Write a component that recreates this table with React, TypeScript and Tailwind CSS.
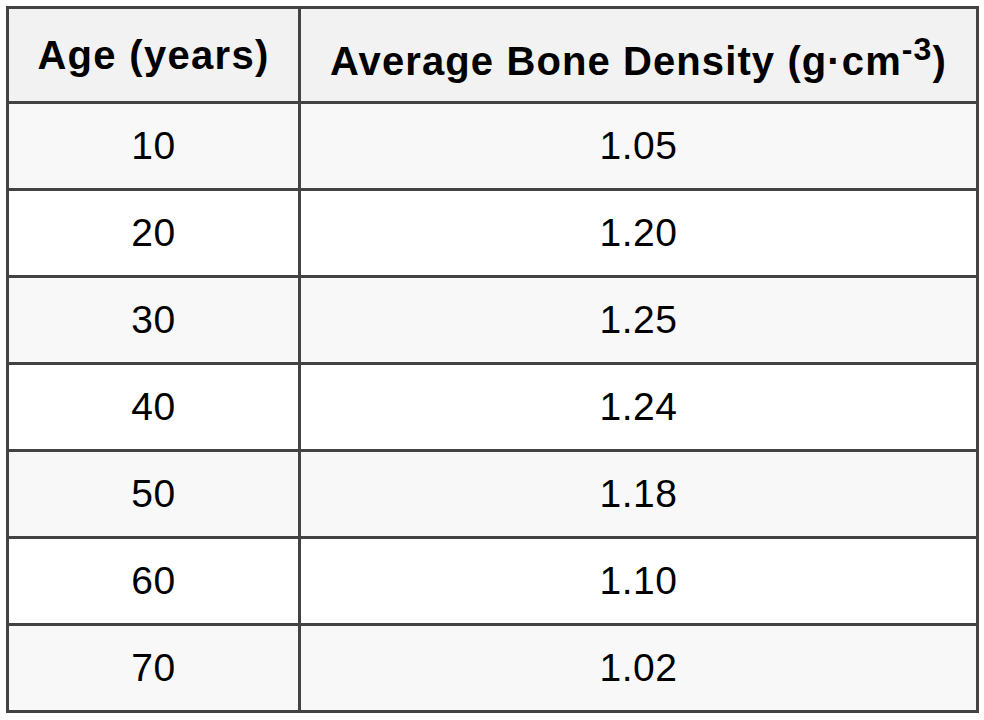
const ROWS: [string, string][] = [
  ["10", "1.05"],
  ["20", "1.20"],
  ["30", "1.25"],
  ["40", "1.24"],
  ["50", "1.18"],
  ["60", "1.10"],
  ["70", "1.02"],
];

export default function App() {
  return (
    <div className="h-[720px] w-[984px] bg-white pl-[6px] pt-[6px] font-['Liberation_Sans',Arial,sans-serif] text-black">
      <div className="w-[973px] border-[3px] border-[#434343]">
        {/* Header */}
        <div className="flex h-[92px] bg-[#f2f2f2]">
          <div className="flex w-[292px] items-center justify-center border-r-[3px] border-[#434343] text-[40px] font-bold tracking-[1.3px]">
            Age (years)
          </div>
          <div className="flex flex-1 items-center justify-center pt-[12px] text-[40px] font-bold tracking-[1.1px]">
            <span>
              Average Bone Density (g·cm
              <span className="relative -top-[15px] text-[32px]">-3</span>)
            </span>
          </div>
        </div>

        {/* Rows */}
        {ROWS.map(([age, density], i) => (
          <div
            key={age}
            className={`flex h-[87px] border-t-[3px] border-[#434343] text-[39px] tracking-[0.5px] ${
              i % 2 === 0 ? "bg-[#f8f8f8]" : "bg-white"
            }`}
          >
            <div className="flex w-[292px] items-center justify-center border-r-[3px] border-[#434343]">
              {age}
            </div>
            <div className="flex flex-1 items-center justify-center">{density}</div>
          </div>
        ))}
      </div>
    </div>
  );
}
